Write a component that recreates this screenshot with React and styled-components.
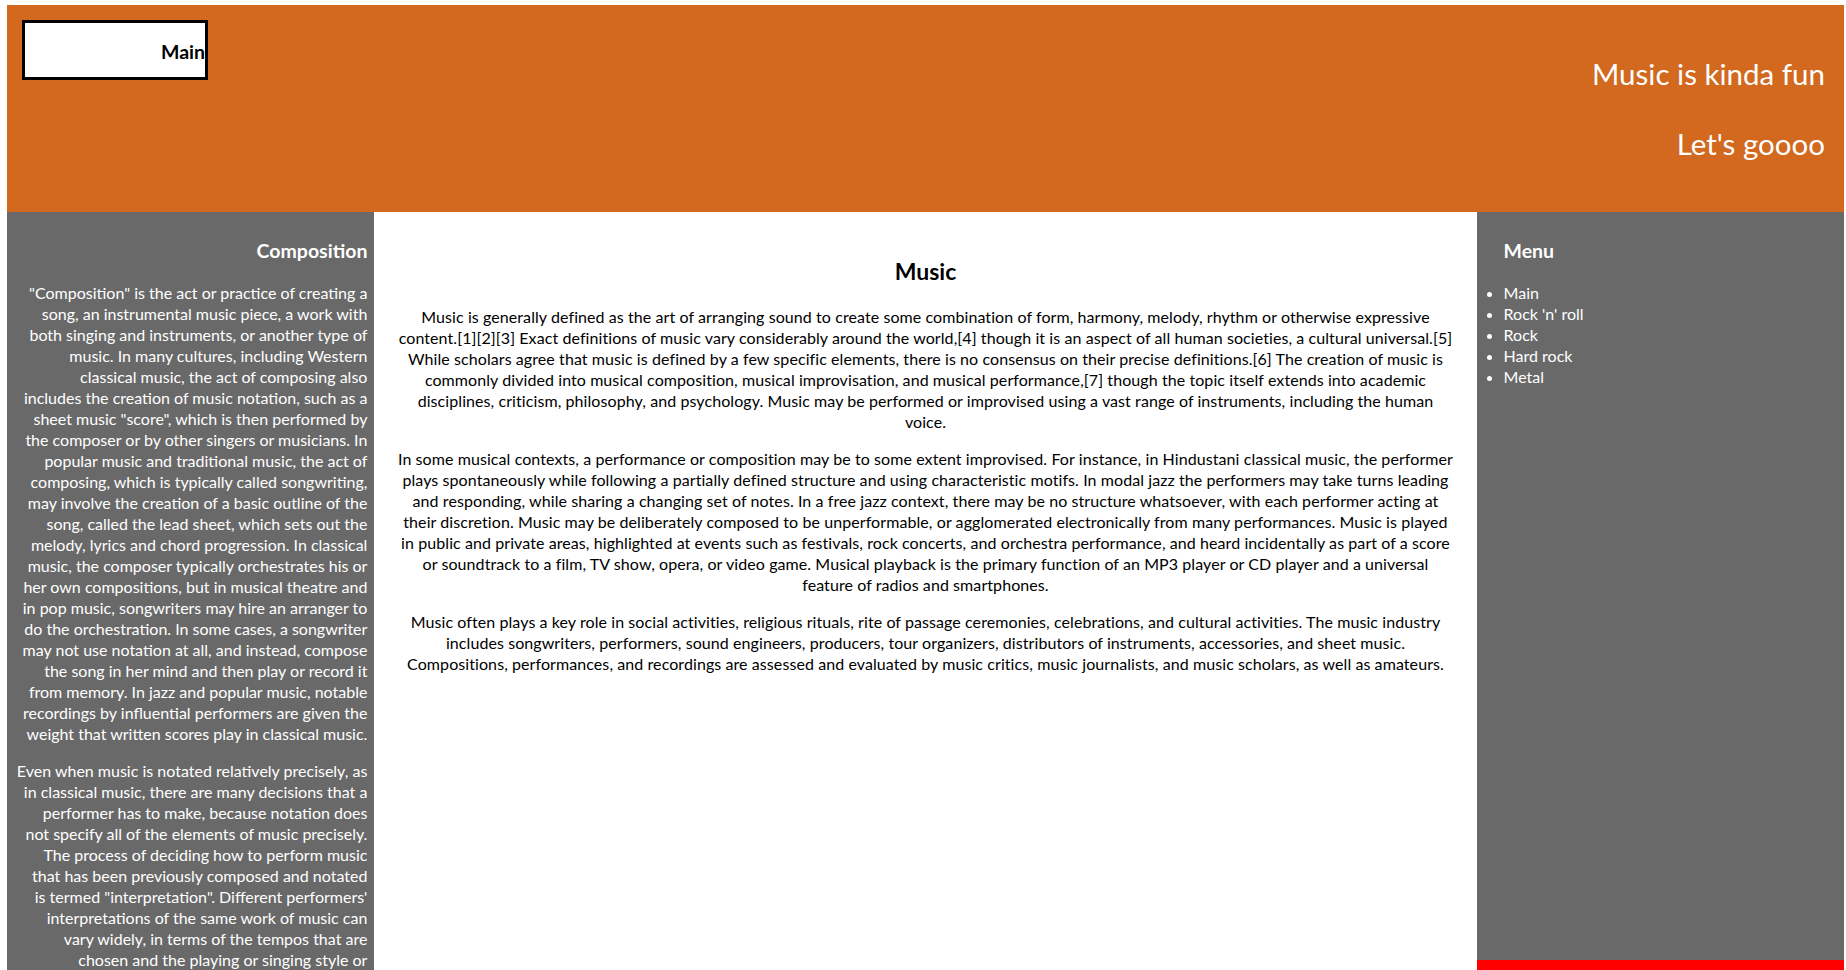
import React from "react";
import styled, { createGlobalStyle } from "styled-components";

const GlobalStyle = createGlobalStyle`
  html, body { margin: 0; padding: 0; background: #ffffff; }
  body { font-family: Lato, "Liberation Sans", sans-serif; font-size: 16px; }
`;

const Page = styled.div`
  padding: 5px 2px 0 7px;
`;

const Layout = styled.div`
  display: grid;
  grid-template-columns: 20% 60% 20%;
  grid-template-rows: 207px 748px auto;
  grid-template-areas:
    "header header header"
    "left main right"
    "left main footer";
`;

const Header = styled.header`
  grid-area: header;
  background: #d2691e;
  display: flex;
  justify-content: space-between;
  align-items: flex-start;
  padding: 15px 19px 0 15px;
`;

const MainButton = styled.div`
  width: 180px;
  height: 51px;
  padding-top: 3px;
  border: 3px solid #000;
  background: #fff;
  color: #000;
  font-weight: 700;
  font-size: 19.5px;
  display: flex;
  align-items: center;
  justify-content: flex-end;
`;

const Slogans = styled.div`
  display: flex;
  flex-direction: column;
  align-items: flex-end;
  gap: 33px;
  padding-top: 35px;
`;

const Slogan = styled.div`
  color: #fff;
  font-size: 29.5px;
  line-height: 37px;
`;

const Side = styled.aside`
  grid-area: ${(p) => p.$area};
  background: #696969;
  color: #fff;
  padding: ${(p) => (p.$area === "left" ? "7px 7px 8px 8px" : "7px 8px 8px 27px")};
  text-align: ${(p) => (p.$area === "left" ? "right" : "left")};
  overflow: hidden;
`;

const SideTitle = styled.h3`
  font-size: 19.5px;
  line-height: 25px;
  font-weight: 700;
  margin: 19px 0;
`;

const Para = styled.p`
  line-height: 21px;
  margin: 16px 0;
`;

const Menu = styled.ul`
  margin: 19px 0;
  padding: 0;
  list-style: disc outside;
`;

const MenuItem = styled.li`
  line-height: 21px;
`;

const Main = styled.main`
  grid-area: main;
  background: #fff;
  color: #000;
  padding: 24px 20px;
  text-align: center;
  letter-spacing: 0.08px;
`;

const MainTitle = styled.h2`
  font-size: 23px;
  line-height: 28px;
  font-weight: 700;
  margin: 21px 0;
  letter-spacing: 0;
`;

const Footer = styled.footer`
  grid-area: footer;
  background: #ff0000;
  min-height: 40px;
`;

const leftParas = [
  [
    '"Composition" is the act or practice of creating a',
    "song, an instrumental music piece, a work with",
    "both singing and instruments, or another type of",
    "music. In many cultures, including Western",
    "classical music, the act of composing also",
    "includes the creation of music notation, such as a",
    'sheet music "score", which is then performed by',
    "the composer or by other singers or musicians. In",
    "popular music and traditional music, the act of",
    "composing, which is typically called songwriting,",
    "may involve the creation of a basic outline of the",
    "song, called the lead sheet, which sets out the",
    "melody, lyrics and chord progression. In classical",
    "music, the composer typically orchestrates his or",
    "her own compositions, but in musical theatre and",
    "in pop music, songwriters may hire an arranger to",
    "do the orchestration. In some cases, a songwriter",
    "may not use notation at all, and instead, compose",
    "the song in her mind and then play or record it",
    "from memory. In jazz and popular music, notable",
    "recordings by influential performers are given the",
    "weight that written scores play in classical music.",
  ],
  [
    "Even when music is notated relatively precisely, as",
    "in classical music, there are many decisions that a",
    "performer has to make, because notation does",
    "not specify all of the elements of music precisely.",
    "The process of deciding how to perform music",
    "that has been previously composed and notated",
    'is termed "interpretation". Different performers\'',
    "interpretations of the same work of music can",
    "vary widely, in terms of the tempos that are",
    "chosen and the playing or singing style or",
    "phrasing. Composers and songwriters who present their own music are interpreting their songs, just as much as those who perform the music of others. The standard body of choices and techniques present at a given time and a given place is referred to as performance practice, whereas interpretation is generally used to mean the individual choices of a performer.",
  ],
];

const mainParas = [
  [
    "Music is generally defined as the art of arranging sound to create some combination of form, harmony, melody, rhythm or otherwise expressive",
    "content.[1][2][3] Exact definitions of music vary considerably around the world,[4] though it is an aspect of all human societies, a cultural universal.[5]",
    "While scholars agree that music is defined by a few specific elements, there is no consensus on their precise definitions.[6] The creation of music is",
    "commonly divided into musical composition, musical improvisation, and musical performance,[7] though the topic itself extends into academic",
    "disciplines, criticism, philosophy, and psychology. Music may be performed or improvised using a vast range of instruments, including the human",
    "voice.",
  ],
  [
    "In some musical contexts, a performance or composition may be to some extent improvised. For instance, in Hindustani classical music, the performer",
    "plays spontaneously while following a partially defined structure and using characteristic motifs. In modal jazz the performers may take turns leading",
    "and responding, while sharing a changing set of notes. In a free jazz context, there may be no structure whatsoever, with each performer acting at",
    "their discretion. Music may be deliberately composed to be unperformable, or agglomerated electronically from many performances. Music is played",
    "in public and private areas, highlighted at events such as festivals, rock concerts, and orchestra performance, and heard incidentally as part of a score",
    "or soundtrack to a film, TV show, opera, or video game. Musical playback is the primary function of an MP3 player or CD player and a universal",
    "feature of radios and smartphones.",
  ],
  [
    "Music often plays a key role in social activities, religious rituals, rite of passage ceremonies, celebrations, and cultural activities. The music industry",
    "includes songwriters, performers, sound engineers, producers, tour organizers, distributors of instruments, accessories, and sheet music.",
    "Compositions, performances, and recordings are assessed and evaluated by music critics, music journalists, and music scholars, as well as amateurs.",
  ],
];

const menuItems = ["Main", "Rock 'n' roll", "Rock", "Hard rock", "Metal"];

function Lines({ lines }) {
  return (
    <Para>
      {lines.map((line, i) => (
        <React.Fragment key={i}>
          {i > 0 && <br />}
          {line}
        </React.Fragment>
      ))}
    </Para>
  );
}

export default function App() {
  return (
    <>
      <GlobalStyle />
      <Page>
        <Layout>
          <Header>
            <MainButton>Main</MainButton>
            <Slogans>
              <Slogan>Music is kinda fun</Slogan>
              <Slogan>Let's goooo</Slogan>
            </Slogans>
          </Header>
          <Side $area="left">
            <SideTitle>Composition</SideTitle>
            {leftParas.map((l, i) => (
              <Lines key={i} lines={l} />
            ))}
          </Side>
          <Main>
            <MainTitle>Music</MainTitle>
            {mainParas.map((l, i) => (
              <Lines key={i} lines={l} />
            ))}
          </Main>
          <Side $area="right">
            <SideTitle>Menu</SideTitle>
            <Menu>
              {menuItems.map((m) => (
                <MenuItem key={m}>{m}</MenuItem>
              ))}
            </Menu>
          </Side>
          <Footer />
        </Layout>
      </Page>
    </>
  );
}
